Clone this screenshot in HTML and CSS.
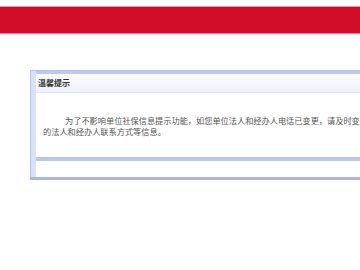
FILE: index.html
```html
<!DOCTYPE html>
<html>
<head>
<meta charset="utf-8">
<title>温馨提示</title>
<link rel="stylesheet" href="styles.css">
</head>
<body>
<div class="topbar"></div>
<div class="panel">
<div class="panel-head">温馨提示</div>
<div class="panel-body">
<p class="notice">为了不影响单位社保信息提示功能，如您单位法人和经办人电话已变更，请及时变更单位<br>的法人和经办人联系方式等信息。</p>
</div>
<div class="panel-foot"></div>
</div>
</body>
</html>
```
FILE: styles.css
```css
/* Notice page */

body
{ margin: 0;
overflow: hidden;
background: white;
font-family: "Noto Sans CJK SC", "Liberation Sans", sans-serif;
}

div.topbar
{ margin-top: 6px;
height: 26px;
background-color: #d10d29;
border-top: 1px solid #e89aa6;
border-bottom: 1px solid #e07f8e;
}

div.panel
{ margin: 36px 0 0 30px;
width: 440px;
border: 1px solid #b5c2ec;
border-bottom-width: 3px;
border-bottom-color: #a9b7e6;
background-color: #dae2f8;
padding-left: 5px;
}

div.panel-head
{ height: 18px;
line-height: 18px;
border-top: 3px solid #bccaf1;
background: linear-gradient(#fbfcfe, #eef2fb);
padding-left: 2px;
font-size: 8px;
font-weight: bold;
color: #333;
}

div.panel-body
{ height: 64px;
background: white;
border-top: 1px solid #dfe5f5;
}

p.notice
{ margin: 0;
padding: 22px 0 0 7px;
white-space: nowrap;
font-size: 8.2px;
line-height: 11px;
text-indent: 22px;
color: #555;
}

div.panel-foot
{ height: 16px;
background: white;
border-top: 4px solid #bac7f0;
}
```
